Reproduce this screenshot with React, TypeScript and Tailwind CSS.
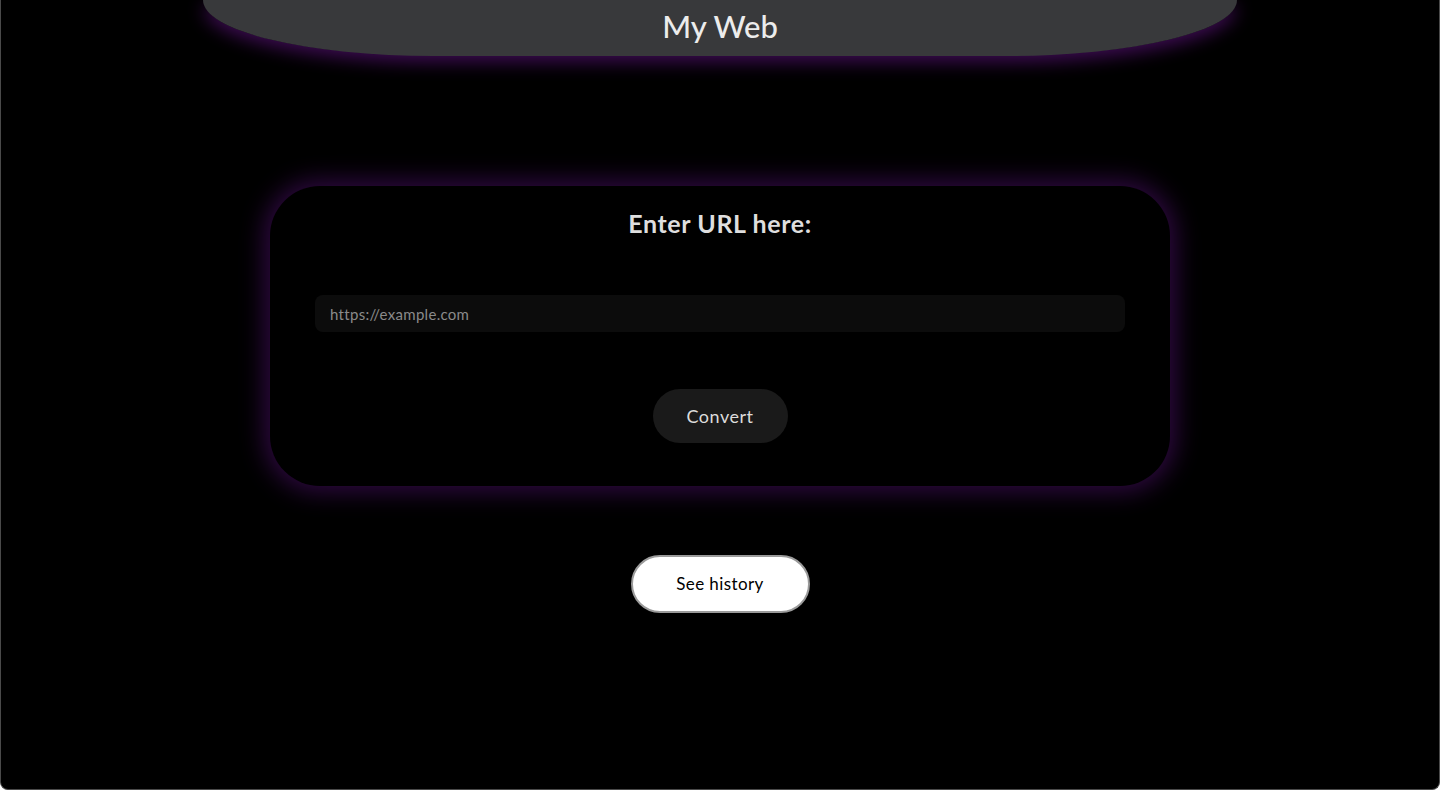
import React from 'react';

const App: React.FC = () => {
  return (
    <div
      className="h-[790px] w-full bg-black border-x border-b border-[#4a4a4a] rounded-b-lg overflow-hidden flex flex-col items-center"
      style={{ fontFamily: 'Lato, "Noto Sans", sans-serif' }}
    >
      {/* HEADER */}
      <header className="w-[1034px] h-[56px] shrink-0 bg-[#38393b] rounded-bl-[230px_56px] rounded-br-[230px_56px] shadow-[0_6px_18px_#3d0c52] flex items-center justify-center">
        <h1 className="text-[31px] text-[#ececec] font-medium leading-none pb-[4px]">My Web</h1>
      </header>

      {/* CARD */}
      <section className="mt-[130px] w-[900px] h-[300px] rounded-[50px] bg-black shadow-[0_0_24px_6px_#2e0940] flex flex-col items-center">
        <h2 className="mt-[22px] text-[25px] font-bold tracking-[0.6px] text-[#dedede] leading-[30px]">Enter URL here:</h2>
        <input
          type="text"
          placeholder="https://example.com"
          className="mt-[57px] w-[810px] h-[37px] rounded-lg bg-[#0c0c0c] px-[15px] text-[15px] tracking-[0.3px] text-[#bbb] placeholder:text-[#8a8a8a] outline-none"
        />
        <button className="mt-[57px] w-[135px] h-[54px] rounded-full bg-[#1a1a1a] text-[18px] tracking-[0.5px] text-[#dcdcdc]">
          Convert
        </button>
      </section>

      {/* HISTORY */}
      <button className="mt-[69px] w-[179px] h-[58px] rounded-full bg-white border-2 border-[#9a9a9a] text-[17px] tracking-[0.4px] text-black">
        See history
      </button>
    </div>
  );
};

export default App;
